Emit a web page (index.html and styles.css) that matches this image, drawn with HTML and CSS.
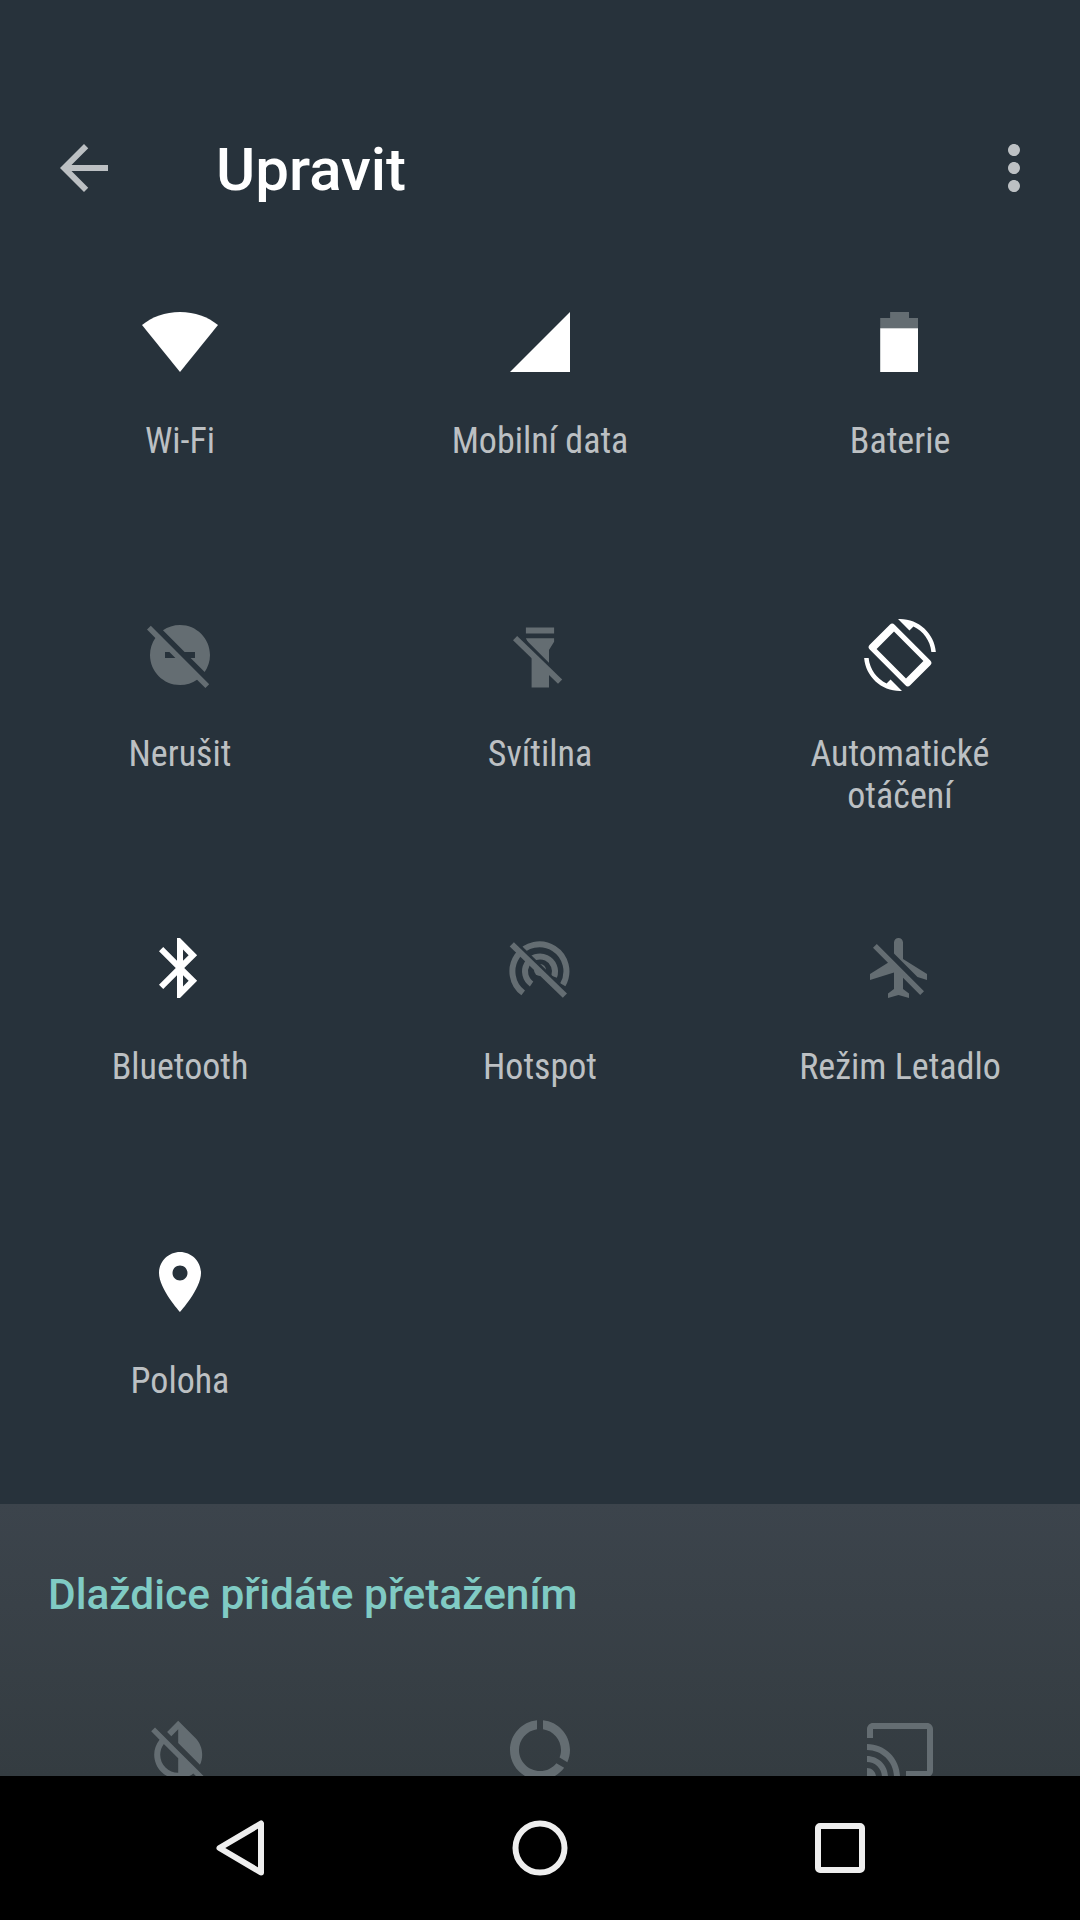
FILE: index.html
```html
<!DOCTYPE html>
<html lang="cs">
<head>
    <meta charset="UTF-8">
    <meta name="viewport" content="width=device-width, initial-scale=1.0">
    <title>Upravit</title>
    <link rel="stylesheet" href="styles.css">
</head>
<body>
    <div class="screen">
        <header class="toolbar">
            <svg class="icon back" viewBox="0 0 24 24"><path d="M20 11H7.83l5.59-5.59L12 4l-8 8 8 8 1.41-1.41L7.83 13H20v-2z"/></svg>
            <h1>Upravit</h1>
            <svg class="icon more" viewBox="0 0 24 24"><path d="M12 8c1.1 0 2-.9 2-2s-.9-2-2-2-2 .9-2 2 .9 2 2 2zm0 2c-1.1 0-2 .9-2 2s.9 2 2 2 2-.9 2-2-.9-2-2-2zm0 6c-1.1 0-2 .9-2 2s.9 2 2 2 2-.9 2-2-.9-2-2-2z"/></svg>
        </header>

        <main class="tiles">
            <div class="tile">
                <svg class="icon on" viewBox="0 0 24 24"><path d="M12 22L24.67 6.33C21.3 3.67 17 2 12 2S2.7 3.67-.67 6.33z"/></svg>
                <span>Wi-Fi</span>
            </div>
            <div class="tile">
                <svg class="icon on" viewBox="0 0 24 24"><path d="M2 22h20V2z"/></svg>
                <span>Mobilní data</span>
            </div>
            <div class="tile">
                <svg class="icon on" viewBox="0 0 24 24">
                    <path class="dim" d="M8.7 2h6.3v2h3v3.5H5.4V4h3.3z"/>
                    <path d="M5.4 7.4h12.6V22H5.4z"/>
                </svg>
                <span>Baterie</span>
            </div>

            <div class="tile">
                <svg class="icon off" viewBox="0 0 24 24"><path d="M17 11v2h-1.46l4.68 4.68C21.34 16.07 22 14.11 22 12c0-5.52-4.48-10-10-10-2.11 0-4.07.66-5.68 1.78L13.54 11H17zM2.27 2.27L1 3.54l2.78 2.78C2.66 7.93 2 9.89 2 12c0 5.52 4.48 10 10 10 2.11 0 4.07-.66 5.68-1.78L20.46 23l1.27-1.27L11 11 2.27 2.27zM7 13v-2h1.46l2 2H7z"/></svg>
                <span>Nerušit</span>
            </div>
            <div class="tile">
                <svg class="icon off" viewBox="0 0 24 24">
                    <path d="M7.3 2.8h9.4v2H7.3zM7.3 6.4h9.4v1.2L15 10.3V22.8H9.2V10.3z"/>
                    <path class="gap" d="M4.4 5L19.4 20"/>
                    <path class="slash" d="M3.7 6.4L18.7 20.9"/>
                </svg>
                <span>Svítilna</span>
            </div>
            <div class="tile">
                <svg class="icon on" viewBox="0 0 24 24">
                    <path d="M16.48 2.52c3.27 1.55 5.61 4.72 5.97 8.48h1.5C23.44 4.84 18.29 0 12 0l-.66.03 3.81 3.81 1.33-1.32zM7.52 21.48C4.25 19.94 1.91 16.76 1.55 13H.05C.56 19.16 5.71 24 12 24l.66-.03-3.81-3.81-1.33 1.32z"/>
                    <path fill-rule="evenodd" d="M8.6 1.9Q9.4 1.1 10.2 1.9L22.1 13.8Q22.9 14.6 22.1 15.4L15.4 22.1Q14.6 22.9 13.8 22.1L1.9 10.2Q1.1 9.4 1.9 8.6zM10 4.2L4.2 10 14 19.8 19.8 14z"/>
                </svg>
                <span>Automatické otáčení</span>
            </div>

            <div class="tile">
                <svg class="icon on" viewBox="0 0 24 24"><path d="M17.71 7.71L12 2h-1v7.59L6.41 5 5 6.41 10.59 12 5 17.59 6.41 19 11 14.41V22h1l5.71-5.71-4.3-4.29 4.3-4.29zM13 5.83l1.88 1.88L13 9.59V5.83zm1.88 10.46L13 18.17v-3.76l1.88 1.88z"/></svg>
                <span>Bluetooth</span>
            </div>
            <div class="tile">
                <svg class="icon off" viewBox="0 0 24 24">
                    <circle cx="12" cy="12.7" r="2"/>
                    <path class="arc" d="M6.4 20.3A9 9 0 1 1 19.6 17.6"/>
                    <path class="arc" d="M9.2 17.3A5 5 0 1 1 16.7 14.9"/>
                    <path class="gap" d="M3.4 3.2L21 20.3"/>
                    <path class="slash" d="M2.6 4.1L20.3 21.2"/>
                </svg>
                <span>Hotspot</span>
            </div>
            <div class="tile">
                <svg class="icon off" viewBox="0 0 24 24"><path d="M13 9V3.5c0-.83-.67-1.5-1.5-1.5S10 2.67 10 3.5v3.68l7.83 7.83L21 16v-2l-8-5zM3 5.27l4.99 4.99L2 14v2l8-2.5V19l-2 1.5V22l3.5-1 3.5 1v-1.5L13 19v-3.73L18.73 21 20 19.73 4.27 4 3 5.27z"/></svg>
                <span>Režim Letadlo</span>
            </div>

            <div class="tile">
                <svg class="icon on" viewBox="0 0 24 24"><path d="M12 2C8.13 2 5 5.13 5 9c0 5.25 7 13 7 13s7-7.75 7-13c0-3.87-3.13-7-7-7zm0 9.5c-1.38 0-2.5-1.12-2.5-2.5s1.12-2.5 2.5-2.5 2.5 1.12 2.5 2.5-1.12 2.5-2.5 2.5z"/></svg>
                <span>Poloha</span>
            </div>
        </main>

        <section class="panel">
            <h2>Dlaždice přidáte přetažením</h2>
            <div class="panel-icons">
                <svg class="icon off" viewBox="0 0 24 24"><path transform="translate(-.6 0)" d="M20.65 20.87l-2.35-2.35-6.3-6.3-3.56-3.56-1.42-1.42L4.27 4.5 3 5.77l2.78 2.78c-2.55 3.14-2.36 7.76.56 10.69C7.9 20.8 9.95 21.58 12 21.58c1.79 0 3.57-.59 5.03-1.78l2.7 2.7L21 21.23l-.35-.36zM12 19.59c-1.6 0-3.11-.62-4.24-1.76C6.62 16.69 6 15.19 6 13.59c0-1.32.43-2.57 1.21-3.6L12 14.77v4.82zM12 5.1v4.58l7.25 7.26c1.37-2.96.84-6.57-1.6-9.01L12 2.27l-3.7 3.7 1.41 1.41L12 5.1z"/></svg>
                <svg class="icon off" viewBox="0 0 24 24"><path d="M13 2.05v3.03c3.39.49 6 3.39 6 6.92 0 .9-.18 1.75-.48 2.54l2.6 1.53c.56-1.24.88-2.62.88-4.07 0-5.18-3.95-9.45-9-9.95zM12 19c-3.87 0-7-3.13-7-7 0-3.53 2.61-6.43 6-6.92V2.05C5.94 2.55 2 6.81 2 12c0 5.52 4.47 10 9.99 10 3.31 0 6.24-1.61 8.06-4.09l-2.6-1.53C16.17 17.98 14.21 19 12 19z"/></svg>
                <svg class="icon off" viewBox="0 0 24 24"><path d="M21 3H3c-1.1 0-2 .9-2 2v3h2V5h18v14h-7v2h7c1.1 0 2-.9 2-2V5c0-1.1-.9-2-2-2zM1 18v3h3c0-1.66-1.34-3-3-3zm0-4v2c2.76 0 5 2.24 5 5h2c0-3.87-3.13-7-7-7zm0-4v2c4.97 0 9 4.03 9 9h2c0-6.08-4.93-11-11-11z"/></svg>
            </div>
        </section>

        <nav class="navbar">
            <svg viewBox="0 0 96 96"><path d="M69 23.5v49L27.5 48z"/></svg>
            <svg viewBox="0 0 96 96"><circle cx="48" cy="48" r="24.5"/></svg>
            <svg viewBox="0 0 96 96"><rect x="26" y="26" width="44" height="44" rx="2"/></svg>
        </nav>
    </div>
</body>
</html>
```

FILE: styles.css
```css
:root {
  --bg: #27323b;
  --panel-top: #3c444c;
  --panel-bottom: #343c41;
  --icon-off: #646d72;
  --label: #bcc0c3;
  --accent: #80cbc4;
}

* {
  box-sizing: border-box;
  margin: 0;
  padding: 0;
}

body {
  width: 1080px;
  height: 1920px;
  overflow: hidden;
  background: #000;
  font-family: Roboto, "Noto Sans", sans-serif;
}

.screen {
  display: flex;
  flex-direction: column;
  height: 1920px;
  background: var(--bg);
}

.icon {
  display: block;
  width: 72px;
  height: 72px;
  flex: none;
  overflow: visible;
}

.toolbar {
  display: flex;
  align-items: center;
  flex: none;
  padding: 132px 30px 0 48px;
}

.toolbar h1 {
  flex: 1;
  height: 72px;
  margin-left: 96px;
  padding-top: 2px;
  color: #fff;
  font-size: 60px;
  line-height: 72px;
  font-weight: 500;
}

.back,
.more {
  fill: #bcc0c3;
}

.tiles {
  flex: 1;
  min-height: 0;
  display: grid;
  grid-template-columns: repeat(3, 360px);
  grid-template-rows: 313px 313px 314px auto;
  padding-top: 102px;
}

.tile {
  display: flex;
  flex-direction: column;
  align-items: center;
  padding: 0 60px;
  text-align: center;
}

.tile span {
  margin-top: 42px;
  color: var(--label);
  font-size: 36px;
  line-height: 42px;
  font-stretch: 75%;
}

.on {
  fill: #fff;
}

.off {
  fill: var(--icon-off);
}

.dim {
  fill: var(--icon-off);
}

.slash,
.gap,
.arc {
  fill: none;
  stroke-width: 2;
}

.slash,
.arc {
  stroke: var(--icon-off);
}

.gap {
  stroke: var(--bg);
  stroke-width: 1.4;
}

.panel {
  flex: none;
  height: 272px;
  overflow: hidden;
  background: linear-gradient(var(--panel-top), var(--panel-bottom));
}

.panel h2 {
  padding: 65px 48px 0;
  color: var(--accent);
  font-size: 42.4px;
  line-height: 52px;
  font-weight: 500;
}

.panel-icons {
  display: grid;
  grid-template-columns: repeat(3, 360px);
  justify-items: center;
  padding-top: 93px;
}

.navbar {
  display: grid;
  grid-template-columns: repeat(3, 300px);
  justify-items: center;
  align-items: center;
  flex: none;
  height: 144px;
  padding: 0 90px;
  background: #000;
}

.navbar svg {
  width: 96px;
  height: 96px;
  fill: none;
  stroke: #eee;
  stroke-width: 6;
  stroke-linejoin: round;
}
```
